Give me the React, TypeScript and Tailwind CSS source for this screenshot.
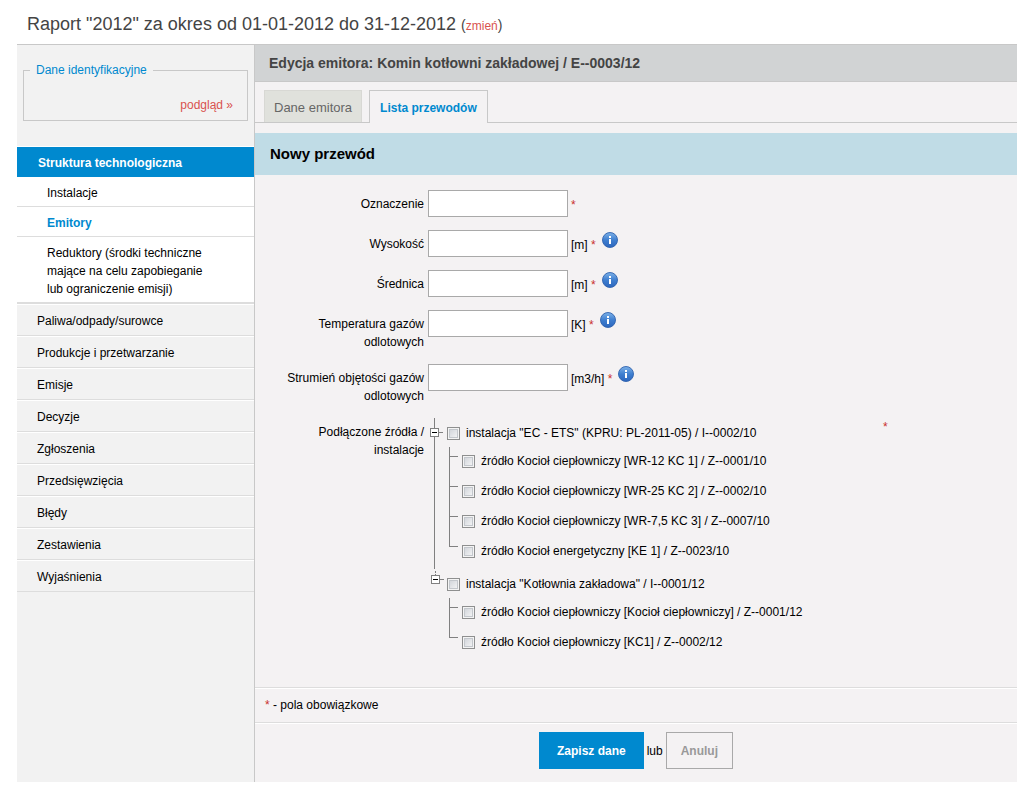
import { useState } from 'react';

interface TreeNode {
  id: string;
  label: string;
  children: { id: string; label: string }[];
}

const SUB_MENU = [
  { label: 'Instalacje', active: false },
  { label: 'Emitory', active: true },
  { label: 'Reduktory (środki techniczne mające na celu zapobieganie lub ograniczenie emisji)', active: false },
];

const MENU = [
  'Paliwa/odpady/surowce',
  'Produkcje i przetwarzanie',
  'Emisje',
  'Decyzje',
  'Zgłoszenia',
  'Przedsięwzięcia',
  'Błędy',
  'Zestawienia',
  'Wyjaśnienia',
];

const FIELDS = [
  { id: 'oznaczenie', label: 'Oznaczenie', unit: '' },
  { id: 'wysokosc', label: 'Wysokość', unit: '[m]' },
  { id: 'srednica', label: 'Średnica', unit: '[m]' },
  { id: 'temperatura', label: 'Temperatura gazów odlotowych', unit: '[K]' },
  { id: 'strumien', label: 'Strumień objętości gazów odlotowych', unit: '[m3/h]' },
];

const TREE: TreeNode[] = [
  {
    id: 'i-0002-10',
    label: 'instalacja "EC - ETS" (KPRU: PL-2011-05) / I--0002/10',
    children: [
      { id: 'z-0001-10', label: 'źródło Kocioł ciepłowniczy [WR-12 KC 1] / Z--0001/10' },
      { id: 'z-0002-10', label: 'źródło Kocioł ciepłowniczy [WR-25 KC 2] / Z--0002/10' },
      { id: 'z-0007-10', label: 'źródło Kocioł ciepłowniczy [WR-7,5 KC 3] / Z--0007/10' },
      { id: 'z-0023-10', label: 'źródło Kocioł energetyczny [KE 1] / Z--0023/10' },
    ],
  },
  {
    id: 'i-0001-12',
    label: 'instalacja "Kotłownia zakładowa" / I--0001/12',
    children: [
      { id: 'z-0001-12', label: 'źródło Kocioł ciepłowniczy [Kocioł ciepłowniczy] / Z--0001/12' },
      { id: 'z-0002-12', label: 'źródło Kocioł ciepłowniczy [KC1] / Z--0002/12' },
    ],
  },
];

function Required() {
  return <span className="text-[#c9302c]">*</span>;
}

function InfoIcon() {
  return (
    <svg width="16" height="16" viewBox="0 0 16 16" aria-hidden="true">
      <defs>
        <linearGradient id="info-fill" x1="0" y1="0" x2="0" y2="1">
          <stop offset="0" stopColor="#7db2e8" />
          <stop offset="0.5" stopColor="#3f7fd0" />
          <stop offset="1" stopColor="#2c66bd" />
        </linearGradient>
      </defs>
      <circle cx="8" cy="8" r="7.5" fill="url(#info-fill)" stroke="#2f62ae" strokeWidth="0.9" />
      <path d="M7 4h2v2H7zM7 7h2v5H7z" fill="#fff" />
    </svg>
  );
}

function Checkbox({ id }: { id: string }) {
  return (
    <input
      id={id}
      type="checkbox"
      className="size-[13px] shrink-0 appearance-none border border-[#8e8f8f] bg-linear-to-br from-[#cbcfd5] to-[#fafafa] shadow-[inset_0_0_0_1px_#f4f4f4,inset_0_0_0_2px_#c3c7cc] checked:from-[#0089cf] checked:to-[#0089cf]"
    />
  );
}

function Tree() {
  const [closed, setClosed] = useState<string[]>([]);

  const toggle = (id: string) =>
    setClosed((prev) => (prev.includes(id) ? prev.filter((x) => x !== id) : [...prev, id]));

  return (
    <ul className="w-[453px]">
      {TREE.map((node, i) => {
        const last = i === TREE.length - 1;
        const open = !closed.includes(node.id);
        return (
          <li
            key={node.id}
            className={
              last
                ? 'relative before:absolute before:top-0.5 before:left-[7px] before:h-1 before:border-l before:border-dotted before:border-[#808080]'
                : 'relative pb-0.5 before:absolute before:top-0 before:left-1.5 before:h-full before:w-px before:bg-[#808080]'
            }
          >
            <div className="flex h-[29px] items-start">
              <div className={`flex w-[19px] items-center ${last ? 'pt-1.5 pl-[3px]' : 'pt-2.5 pl-0.5'}`}>
                <button
                  type="button"
                  onClick={() => toggle(node.id)}
                  aria-expanded={open}
                  aria-label={node.label}
                  className="relative flex size-[9px] items-center justify-center border border-[#808080] bg-white"
                >
                  <span className="h-px w-[5px] bg-black" />
                  {!open && <span className="absolute h-[5px] w-px bg-black" />}
                </button>
                <span className="h-px w-1 bg-[#808080]" />
              </div>
              <div className="flex pt-[9px]">
                <Checkbox id={node.id} />
              </div>
              <label htmlFor={node.id} className="pt-1.5 pl-1.5">{node.label}</label>
            </div>
            {open && (
              <ul className="ml-[21px]">
                {node.children.map((child) => (
                  <li
                    key={child.id}
                    className="relative flex h-[30px] items-start pl-[13px] before:absolute before:top-0 before:left-0 before:h-full before:w-px before:bg-[#808080] after:absolute after:top-[9px] after:left-0 after:h-px after:w-[9px] after:bg-[#808080] last:before:h-[9px]"
                  >
                    <div className="flex pt-2">
                      <Checkbox id={child.id} />
                    </div>
                    <label htmlFor={child.id} className="pt-[5px] pl-1.5">{child.label}</label>
                  </li>
                ))}
              </ul>
            )}
          </li>
        );
      })}
    </ul>
  );
}

function Sidebar() {
  return (
    <aside className="w-[238px] shrink-0 border-r border-[#c8c8c8] bg-[#f2f2f2]">
      <fieldset className="mx-1.5 mt-4 mb-[25px] border border-[#c8c8c8] px-1.5 pb-1.5">
        <legend className="px-1.5 text-[#0089cf]">Dane identyfikacyjne</legend>
        <p className="pt-[17px] pr-2 text-right">
          <a href="#podglad" className="text-[#d9534f]">podgląd »</a>
        </p>
      </fieldset>
      <nav>
        <ul>
          <li className="border-t border-b border-t-white border-b-[#dddddd]">
            <a href="#struktura" className="block bg-[#0089cf] pt-[7px] pb-[5px] pl-[21px] font-bold text-white">
              Struktura technologiczna
            </a>
            <ul>
              {SUB_MENU.map((item) => (
                <li key={item.label} className="border-b border-[#dddddd] bg-white">
                  <a
                    href="#"
                    className={`block pt-[7px] pr-10 pb-1 pl-[30px] ${item.active ? 'font-bold text-[#0089cf]' : ''}`}
                  >
                    {item.label}
                  </a>
                </li>
              ))}
            </ul>
          </li>
          {MENU.map((item) => (
            <li key={item} className="border-t border-b border-t-white border-b-[#dddddd]">
              <a href="#" className="block pt-[7px] pb-[5px] pl-5">{item}</a>
            </li>
          ))}
        </ul>
      </nav>
    </aside>
  );
}

export default function App() {
  return (
    <div className="min-h-screen bg-white pr-3 pb-3 pl-[17px] font-['Liberation_Sans',Arial,sans-serif] text-[12px] leading-[18px] text-black">
      <header className="flex h-11 items-center pt-1.5 pl-2.5">
        <h1 className="text-[18px] text-[#444444]">
          Raport "2012" za okres od 01-01-2012 do 31-12-2012{' '}
          <span className="text-[14px]">
            (<a href="#zmien" className="text-[12px] text-[#d9534f]">zmień</a>)
          </span>
        </h1>
      </header>

      <div className="flex border-t border-[#c8c8c8]">
        <Sidebar />

        <main className="min-w-0 flex-1 bg-[#f4f2f3]">
          <h2 className="border-b border-[#c8c8c8] bg-[#d1d3d4] py-[9px] pl-3.5 text-[14px] font-bold text-[#444444]">
            Edycja emitora: Komin kotłowni zakładowej / E--0003/12
          </h2>

          <div className="mt-2 flex gap-[7px] border-b border-[#c8c8c8] pl-[9px]">
            <a href="#dane" className="border border-b-0 border-[#d8d8d4] bg-[#e0e1dc] px-[9px] pt-2 pb-[5px] text-[13px] text-[#666666]">
              Dane emitora
            </a>
            <a
              href="#lista"
              className="-mb-px border border-b-0 border-[#c8c8c8] bg-[#f4f2f3] px-2.5 pt-2 pb-[5px] font-bold text-[#0089cf]"
            >
              Lista przewodów
            </a>
          </div>

          <form onSubmit={(e) => e.preventDefault()}>
            <h3 className="mt-2.5 bg-[#c0dce6] py-3 pl-[15px] text-[15px] font-bold">Nowy przewód</h3>

            <div className="pt-[15px] pb-[29px]">
              {FIELDS.map((field) => (
                <div key={field.id} className="mb-[13px] flex items-start">
                  <label htmlFor={field.id} className="w-[169px] pt-[5px] pl-5 text-right">
                    {field.label}
                  </label>
                  <input
                    id={field.id}
                    type="text"
                    className="ml-1 h-[27px] w-[140px] border border-[#a9a9a9] bg-white px-1"
                  />
                  <span className="pt-1.5 pl-[3px]">
                    {field.unit} <Required />
                  </span>
                  {field.unit && (
                    <button type="button" aria-label="Informacja" className="mt-0.5 ml-1.5">
                      <InfoIcon />
                    </button>
                  )}
                </div>
              ))}

              <div className="flex items-start">
                <span className="w-[169px] pt-[5px] pl-5 text-right">Podłączone źródła / instalacje</span>
                <div className="flex pl-1">
                  <Tree />
                  <span className="pl-0.5"><Required /></span>
                </div>
              </div>
            </div>

            <div className="border-t border-[#dddddd]">
              <p className="border-t border-white pt-[7px] pb-2 pl-2.5">
                <Required /> - pola obowiązkowe
              </p>
            </div>

            <div className="border-t border-[#dddddd]">
              <div className="flex items-center justify-center gap-[3px] border-t border-white pt-2 pb-[13px]">
                <button type="submit" className="h-[37px] bg-[#0089cf] px-[18px] font-bold text-white">
                  Zapisz dane
                </button>
                <span>lub</span>
                <button type="button" className="h-[37px] border border-[#a9a9a9] px-3.5 font-bold text-[#999999]">
                  Anuluj
                </button>
              </div>
            </div>
          </form>
        </main>
      </div>
    </div>
  );
}
